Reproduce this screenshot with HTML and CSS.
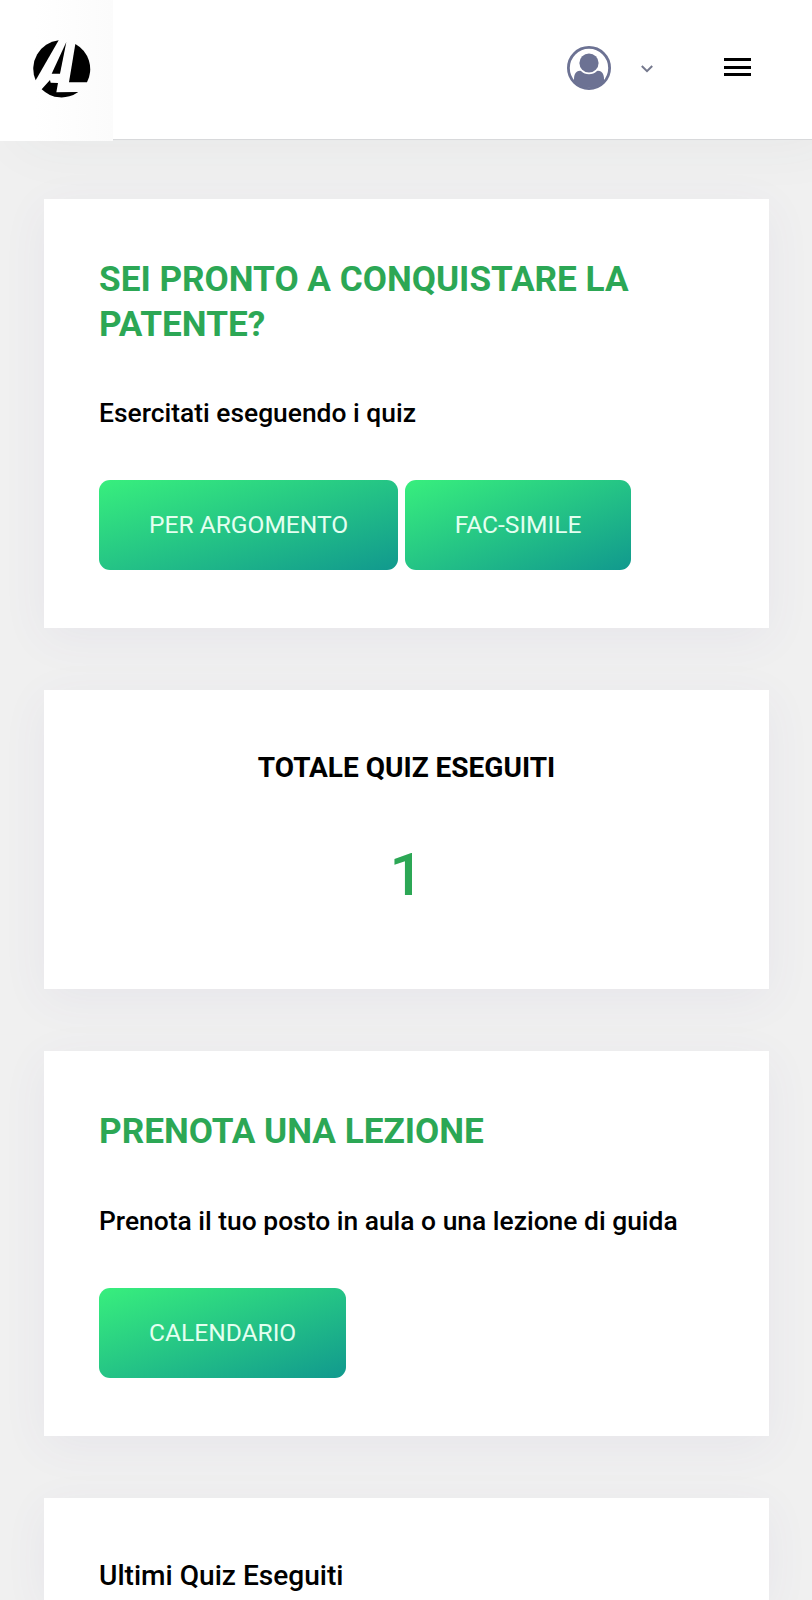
FILE: index.html
```
<!DOCTYPE html>
<html lang="it">
<head>
    <meta charset="UTF-8">
    <meta name="viewport" content="width=device-width, initial-scale=1.0">
    <title>Quiz Patente</title>
    <link rel="stylesheet" href="styles.css">
</head>
<body>
    <header class="header">
        <a class="logo" href="#">
            <svg viewBox="100 118 174 174" width="58" height="58">
                <path d="M177 119 A86 86 0 0 0 108 239 Z"/>
                <path d="M200 124 L156 219 L181 219 Z"/>
                <path d="M227 130 A86 86 0 0 1 262 245 L208 245 Z"/>
                <path d="M126 266 L151 238 L153 246 L175 247 L170 275 L236 274 A86 86 0 0 1 126 266 Z"/>
            </svg>
        </a>
        <nav class="nav">
            <button class="user" aria-label="Profilo">
                <svg class="avatar" viewBox="0 0 44 44" width="44" height="44">
                    <circle cx="22" cy="22" r="20.6"/>
                    <path class="fill" d="M7 36 C6.5 29 8.5 24.8 13 24.8 H31 C35.5 24.8 37.5 29 37 36 C30 43.5 14 43.5 7 36 Z"/>
                    <circle class="gap" cx="22" cy="17" r="11.3"/>
                    <circle class="fill" cx="22" cy="17" r="9.6"/>
                </svg>
                <svg class="chevron" viewBox="0 0 12 8" width="12" height="8">
                    <path d="M0.8 1 L6 6.2 L11.2 1"/>
                </svg>
            </button>
            <button class="menu" aria-label="Menu">
                <span></span>
                <span></span>
                <span></span>
            </button>
        </nav>
    </header>

    <main class="content">
        <section class="card card-quiz">
            <h2 class="title">SEI PRONTO A CONQUISTARE LA PATENTE?</h2>
            <p class="text">Esercitati eseguendo i quiz</p>
            <div class="buttons">
                <a class="btn" href="#">PER ARGOMENTO</a>
                <a class="btn" href="#">FAC-SIMILE</a>
            </div>
        </section>

        <section class="card card-total">
            <h3 class="total-title">TOTALE QUIZ ESEGUITI</h3>
            <div class="total-number">1</div>
        </section>

        <section class="card card-lesson">
            <h2 class="title">PRENOTA UNA LEZIONE</h2>
            <p class="text">Prenota il tuo posto in aula o una lezione di guida</p>
            <div class="buttons">
                <a class="btn" href="#">CALENDARIO</a>
            </div>
        </section>

        <section class="card card-last">
            <h3 class="last-title">Ultimi Quiz Eseguiti</h3>
        </section>
    </main>
</body>
</html>
```
FILE: styles.css
```
* {
    box-sizing: border-box;
}
body {
    font-family: Roboto, "Liberation Sans", sans-serif;
    background: #f0f0f0;
    margin: 0;
    color: #000;
}
.header {
    display: flex;
    justify-content: space-between;
    height: 140px;
    background: #fff;
    border-bottom: 1px solid #d8d9db;
    box-shadow: 20px 4px 60px rgba(60,70,70,0.05);
}
.logo {
    display: flex;
    width: 113px;
    height: 141px;
    padding: 40px 0 0 33px;
    background: linear-gradient(90deg, #fff 30%, #fbfbfb 100%);
}
.logo svg {
    filter: blur(0.5px);
}
.nav {
    display: flex;
    align-items: flex-start;
    padding: 46px 61px 0 0;
}
.user {
    display: flex;
    align-items: center;
    gap: 30px;
    padding: 0;
    border: none;
    background: none;
}
.avatar {
    fill: none;
    stroke: #6c7293;
    stroke-width: 2.8;
}
.avatar .fill {
    fill: #6c7293;
    stroke: none;
}
.avatar .gap {
    fill: #fff;
    stroke: none;
}
.chevron {
    margin-top: 2px;
    fill: none;
    stroke: #74788d;
    stroke-width: 2;
}
.menu {
    display: flex;
    flex-direction: column;
    gap: 4.5px;
    margin: 12px 0 0 71px;
    padding: 0;
    border: none;
    background: none;
}
.menu span {
    width: 27px;
    height: 3px;
    background: #000;
}
.content {
    display: flex;
    flex-direction: column;
    gap: 62px;
    height: 1460px;
    padding: 59px 43px 0 44px;
    overflow: hidden;
}
.card {
    flex-shrink: 0;
    padding: 58px 55px;
    background: #fff;
    box-shadow: 0 10px 45px rgba(82,63,150,0.06);
}
.card-quiz {
    height: 429px;
}
.card-total {
    height: 299px;
    text-align: center;
}
.card-lesson {
    height: 385px;
}
.card-last {
    height: 102px;
    padding-bottom: 0;
}
.title {
    margin: 0;
    font-size: 35.15px;
    font-weight: 700;
    line-height: 45px;
    color: #2ca755;
}
.text {
    margin: 48px 0 49px;
    font-size: 26.4px;
    font-weight: 500;
    line-height: 36px;
}
.card-lesson .text {
    margin: 49px 0;
}
.buttons {
    display: flex;
    gap: 7px;
}
.btn {
    padding: 0 49.5px 0 50px;
    border-radius: 11px;
    background: linear-gradient(to bottom right, #38ef7d, #11998e);
    color: #e4fff0;
    font-size: 24.55px;
    line-height: 90px;
    text-decoration: none;
}
.total-title {
    margin: 0;
    font-size: 28px;
    font-weight: 700;
    line-height: 40px;
}
.total-number {
    margin-top: 47px;
    font-size: 60px;
    font-weight: 500;
    line-height: 80px;
    color: #2ca755;
}
.last-title {
    margin: 0;
    font-size: 28.1px;
    font-weight: 500;
    line-height: 40px;
}
```
